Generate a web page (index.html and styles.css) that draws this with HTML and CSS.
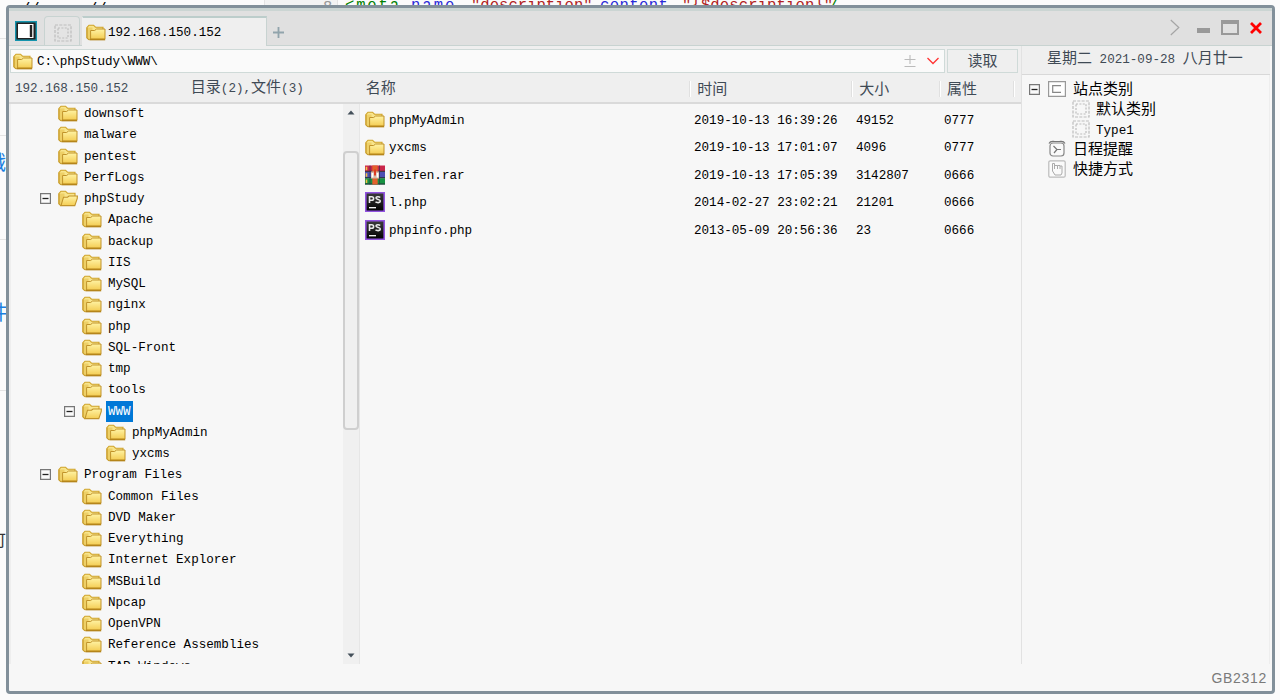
FILE: index.html
```html
<!DOCTYPE html>
<html lang="zh-CN">
<head>
    <meta charset="UTF-8">
    <title>192.168.150.152</title>
    <link rel="stylesheet" href="styles.css">
</head>
<body>

    <svg width="0" height="0" class="defs">
        <defs>
            <linearGradient id="gold" x1="0" y1="0" x2="0" y2="1">
                <stop offset="0" stop-color="#fff3a4"/>
                <stop offset="1" stop-color="#f4cd54"/>
            </linearGradient>
            <linearGradient id="dark" x1="0" y1="0" x2="0" y2="1">
                <stop offset="0" stop-color="#3c3c3c"/>
                <stop offset="1" stop-color="#000"/>
            </linearGradient>
        </defs>
        <symbol id="folder" viewBox="0 0 20 17">
            <path d="M1 14V3.500L3 1.200h4.500l2 2h7.500V6" fill="#f8e58c" stroke="#d0a329" stroke-width="1.1"/>
            <path d="M1.500 3.500v10.500l2 2h3V3.500z" fill="#eed067"/>
            <path d="M1 3.500V14l2 1.800" fill="none" stroke="#c79a25" stroke-width="1.1"/>
            <path d="M4.600 15V6.500h4l2-1.500h8.400v10z" fill="url(#gold)" stroke="#c1932a" stroke-width="1"/>
            <path d="M3.400 15.600h15.800" stroke="#b5851a" stroke-width="1.500"/>
        </symbol>
        <symbol id="folder-open" viewBox="0 0 20 17">
            <path d="M1 14V3.500L3 1.200h4.500l2 2h7.500V7" fill="#f8e58c" stroke="#d0a329" stroke-width="1.1"/>
            <path d="M1.500 3.500v10.500l2 2h3V3.500z" fill="#eed067"/>
            <path d="M3 15.800L1 14V3.500" fill="none" stroke="#c79a25" stroke-width="1.1"/>
            <path d="M3 15.600L5.500 7.200h4L11 6h8.400l-.2 2.600-2.400 7z" fill="url(#gold)" stroke="#c1932a" stroke-width="1.1"/>
        </symbol>
        <symbol id="minus" viewBox="0 0 11 11">
            <path d="M.6.6h9.8v9.8H.6z" fill="#fafafa" stroke="#777" stroke-width="1.2"/>
            <path d="M2.500 5.500h6" stroke="#222" stroke-width="1.3"/>
        </symbol>
        <symbol id="dashed" viewBox="0 0 18 18">
            <path d="M1 1h16v16H1z" fill="none" stroke="#bdbdbd" stroke-width="1.2" stroke-dasharray="3 1.3"/>
            <path d="M4 4h10v10H4z" fill="none" stroke="#bdbdbd" stroke-width="1.2" stroke-dasharray="2 1.4"/>
        </symbol>
        <symbol id="rar" viewBox="0 0 20 19">
            <path d="M0 0h20v6.300H0z" fill="#c9264a"/>
            <path d="M0 6.300h20v6.400H0z" fill="#4b50b4"/>
            <path d="M0 12.700h20V19H0z" fill="#169342"/>
            <path d="M0 5.800h20M0 12.200h20M0 18.500h20" stroke="#29303c" stroke-width="1"/>
            <path d="M1.500 1.300v3.500M1.500 7.800v3.500M1.500 14v3.500" stroke="#f3c04a" stroke-width="1.6"/>
            <path d="M5 0v19M14.500 0v19" stroke="#38304e" stroke-width=".7"/>
            <path d="M7.300 0h5.400v19H7.300z" fill="#e2602b"/>
            <path d="M6 6h8v7H6z" fill="#d8b8a4"/>
            <path d="M7.500 12V7.500M12.500 12V7.500" stroke="#fff" stroke-width="1.8"/>
            <path d="M9 4h2v6H9z" fill="#db3c24"/>
        </symbol>
        <symbol id="phpstorm" viewBox="0 0 20 20">
            <path d="M.8.8h18.400v18.400H.8z" fill="url(#dark)" stroke="#9254e0" stroke-width="1.6"/>
            <path d="M4.500 11V4.700h2.300a1.600 1.600 0 0 1 0 3.600H4.500M15.200 5.500c-1-1-4.200-1.200-4.200.6 0 2 4.300.9 4.300 3 0 2-3.600 1.800-4.800.6" fill="none" stroke="#e8e8e8" stroke-width="1.6"/>
            <path d="M4 15.700h7" stroke="#fff" stroke-width="1.3"/>
        </symbol>
    </svg>

    <!-- editor page behind the window -->
    <div class="backdrop">
        <span class="gutter"></span>
        <span class="code slash-a">//</span>
        <span class="code slash-b">//</span>
        <span class="code line-no">8</span>
        <span class="code tag">&lt;meta</span>
        <span class="code attr name">name</span>
        <span class="code str str-a">"description"</span>
        <span class="code attr content-attr">content</span>
        <span class="code str str-b">"{$description}"</span>
        <span class="code end">/</span>
        <span class="side side-a">戳</span>
        <span class="side side-b">件</span>
        <span class="side side-c">可</span>
        <span class="rule rule-a"></span>
        <span class="rule rule-b"></span>
        <span class="rule rule-c"></span>
        <span class="rule rule-d"></span>
    </div>

    <div class="window">
        <div class="titlebar">
            <svg class="panel-btn" width="22" height="20" viewBox="0 0 22 20">
                <path d="M.7.7h20.600v18.600H.7z" fill="#222" stroke="#1494ad" stroke-width="1.4"/>
                <path d="M3 3h15.500v14H3z" fill="#fff"/>
                <path d="M16 4v12" stroke="#222" stroke-width="2.4"/>
            </svg>
            <div class="tab tab-blank"><svg width="18" height="18"><use href="#dashed"/></svg></div>
            <div class="tab tab-active"><svg width="20" height="17"><use href="#folder"/></svg><span>192.168.150.152</span></div>
            <svg class="plus" width="11" height="11" viewBox="0 0 11 11"><path d="M5.500 0v11M0 5.500h11" stroke="#91a4ac" stroke-width="1.8"/></svg>
            <div class="controls">
                <svg width="10" height="17" viewBox="0 0 10 17"><path d="M.8 1l8 7.500-8 7.500" fill="none" stroke="#a5a5a5" stroke-width="1.2"/></svg>
                <svg width="13" height="17" viewBox="0 0 13 17"><path d="M0 9h13v5H0z" fill="#999"/></svg>
                <svg width="18" height="17" viewBox="0 0 18 17"><path d="M1 2h16v13H1z" fill="none" stroke="#999" stroke-width="2"/><path d="M0 3h18" stroke="#999" stroke-width="4"/></svg>
                <svg width="12" height="17" viewBox="0 0 12 17"><path d="M1 4l10 10M11 4l-10 10" stroke="#f00" stroke-width="2.8"/></svg>
            </div>
        </div>

        <div class="content">
            <div class="main">
                <div class="address-row">
                    <div class="address">
                        <svg width="20" height="17"><use href="#folder"/></svg>
                        <span class="path">C:\phpStudy\WWW\</span>
                        <svg width="12" height="14" viewBox="0 0 12 14"><path d="M6 1v9M.5 5.500h11M.5 12.500h11" stroke="#bbb" stroke-width="1.1"/></svg>
                        <svg class="drop" width="12" height="8" viewBox="0 0 12 8"><path d="M.5 1l5.500 5.500L11.500 1" fill="none" stroke="#f33" stroke-width="1.3"/></svg>
                    </div>
                    <div class="read-btn">读取</div>
                </div>

                <div class="head">
                    <div class="head-host">192.168.150.152</div>
                    <div class="head-count"><span class="zh">目录</span>(2),<span class="zh">文件</span>(3)</div>
                    <div class="head-name">名称</div>
                    <div class="head-time">时间</div>
                    <div class="head-size">大小</div>
                    <div class="head-attr">属性</div>
                    <div class="head-end"></div>
                </div>

                <div class="panes">
                    <div class="tree">
                        <div class="node l1"><svg class="icon"><use href="#folder"/></svg><span>downsoft</span></div>
                        <div class="node l1"><svg class="icon"><use href="#folder"/></svg><span>malware</span></div>
                        <div class="node l1"><svg class="icon"><use href="#folder"/></svg><span>pentest</span></div>
                        <div class="node l1"><svg class="icon"><use href="#folder"/></svg><span>PerfLogs</span></div>
                        <div class="node l1 parent"><svg class="toggle"><use href="#minus"/></svg><svg class="icon"><use href="#folder-open"/></svg><span>phpStudy</span></div>
                        <div class="node l2"><svg class="icon"><use href="#folder"/></svg><span>Apache</span></div>
                        <div class="node l2"><svg class="icon"><use href="#folder"/></svg><span>backup</span></div>
                        <div class="node l2"><svg class="icon"><use href="#folder"/></svg><span>IIS</span></div>
                        <div class="node l2"><svg class="icon"><use href="#folder"/></svg><span>MySQL</span></div>
                        <div class="node l2"><svg class="icon"><use href="#folder"/></svg><span>nginx</span></div>
                        <div class="node l2"><svg class="icon"><use href="#folder"/></svg><span>php</span></div>
                        <div class="node l2"><svg class="icon"><use href="#folder"/></svg><span>SQL-Front</span></div>
                        <div class="node l2"><svg class="icon"><use href="#folder"/></svg><span>tmp</span></div>
                        <div class="node l2"><svg class="icon"><use href="#folder"/></svg><span>tools</span></div>
                        <div class="node l2 parent"><svg class="toggle"><use href="#minus"/></svg><svg class="icon"><use href="#folder-open"/></svg><span class="selected">WWW</span></div>
                        <div class="node l3"><svg class="icon"><use href="#folder"/></svg><span>phpMyAdmin</span></div>
                        <div class="node l3"><svg class="icon"><use href="#folder"/></svg><span>yxcms</span></div>
                        <div class="node l1 parent"><svg class="toggle"><use href="#minus"/></svg><svg class="icon"><use href="#folder"/></svg><span>Program Files</span></div>
                        <div class="node l2"><svg class="icon"><use href="#folder"/></svg><span>Common Files</span></div>
                        <div class="node l2"><svg class="icon"><use href="#folder"/></svg><span>DVD Maker</span></div>
                        <div class="node l2"><svg class="icon"><use href="#folder"/></svg><span>Everything</span></div>
                        <div class="node l2"><svg class="icon"><use href="#folder"/></svg><span>Internet Explorer</span></div>
                        <div class="node l2"><svg class="icon"><use href="#folder"/></svg><span>MSBuild</span></div>
                        <div class="node l2"><svg class="icon"><use href="#folder"/></svg><span>Npcap</span></div>
                        <div class="node l2"><svg class="icon"><use href="#folder"/></svg><span>OpenVPN</span></div>
                        <div class="node l2"><svg class="icon"><use href="#folder"/></svg><span>Reference Assemblies</span></div>
                        <div class="node l2"><svg class="icon"><use href="#folder"/></svg><span>TAP-Windows</span></div>
                    </div>
                    <div class="scrollbar">
                        <svg width="8" height="5" viewBox="0 0 8 5"><path d="M.5 4.500L4 .5l3.500 4z" fill="#44505a"/></svg>
                        <div class="thumb"></div>
                        <svg width="8" height="5" viewBox="0 0 8 5"><path d="M.5.5L4 4.500 7.500.5z" fill="#44505a"/></svg>
                    </div>
                    <div class="files">
                        <div class="file"><svg class="icon"><use href="#folder"/></svg><span>phpMyAdmin</span><span>2019-10-13 16:39:26</span><span>49152</span><span>0777</span></div>
                        <div class="file"><svg class="icon"><use href="#folder"/></svg><span>yxcms</span><span>2019-10-13 17:01:07</span><span>4096</span><span>0777</span></div>
                        <div class="file"><svg class="type-icon"><use href="#rar"/></svg><span>beifen.rar</span><span>2019-10-13 17:05:39</span><span>3142807</span><span>0666</span></div>
                        <div class="file"><svg class="type-icon"><use href="#phpstorm"/></svg><span>l.php</span><span>2014-02-27 23:02:21</span><span>21201</span><span>0666</span></div>
                        <div class="file"><svg class="type-icon"><use href="#phpstorm"/></svg><span>phpinfo.php</span><span>2013-05-09 20:56:36</span><span>23</span><span>0666</span></div>
                    </div>
                </div>
            </div>

            <div class="sidebar">
                <div class="date"><span class="zh">星期二</span> 2021-09-28 <span class="zh">八月廿一</span></div>
                <div class="cats">
                    <div class="cat top"><svg width="11" height="11"><use href="#minus"/></svg><svg width="18" height="16" viewBox="0 0 18 16"><path d="M.6.6h16.800v14.800H.6z" fill="#fff" stroke="#999" stroke-width="1.2"/><path d="M13 4.700H4.700v6.600H13" fill="none" stroke="#888" stroke-width="1.2"/></svg><span>站点类别</span></div>
                    <div class="cat child"><svg width="18" height="18"><use href="#dashed"/></svg><span>默认类别</span></div>
                    <div class="cat child type"><svg width="18" height="18"><use href="#dashed"/></svg><span>Type1</span></div>
                    <div class="cat"><svg width="18" height="18" viewBox="0 0 18 18"><rect x="2" y="3" width="14" height="13" rx="3" fill="#fafafa" stroke="#888" stroke-width="1.2"/><path d="M1 3.500C2.500.5 5 1.500 6.500 1.500h5C13 1.500 15.500.5 17 3.500M5.500 6l3.500 3.500L6 13M9 9.500h4" fill="none" stroke="#777" stroke-width="1.2"/></svg><span>日程提醒</span></div>
                    <div class="cat"><svg width="18" height="18" viewBox="0 0 18 18"><rect x=".8" y=".8" width="16.4" height="16.4" rx="1.5" fill="#fafafa" stroke="#bbb" stroke-width="1.2"/><path d="M4.500 3.500v7.500l2.500 4h6l1-2V6h-2v3M6.500 9V3.500h-2M6.500 5.500h3V9M9.500 5.500H12" fill="none" stroke="#aaa" stroke-width="1"/></svg><span>快捷方式</span></div>
                </div>
            </div>
        </div>

        <div class="status">GB2312</div>
    </div>

</body>
</html>
```
FILE: styles.css
```css
* {
    box-sizing: border-box;
}

body {
    margin: 0;
    height: 700px;
    overflow: hidden;
    position: relative;
    background: #fbfbfb;
    font-family: "Liberation Mono", "Noto Sans CJK SC", monospace;
    font-size: 12.6px;
    line-height: 20px;
    color: #000;
    white-space: nowrap;
}

svg {
    display: block;
    flex: none;
}

.defs {
    position: absolute;
}

.zh {
    font-size: 15px;
}

/* what shows around the window edges */
.backdrop {
    position: absolute;
    inset: 0;
    overflow: hidden;
}

.backdrop span {
    position: absolute;
}

.gutter {
    left: 264px;
    top: 0;
    width: 74px;
    height: 5px;
    background: #f3f3f3;
    border-left: 1px solid #e4e4e4;
    border-right: 1px solid #e4e4e4;
}

.code {
    top: -4px;
    font-size: 15.6px;
    line-height: 20px;
}

.slash-a {
    left: 21px;
    top: 0;
}

.slash-b {
    left: 88px;
    top: 0;
}

.line-no {
    left: 323px;
    top: -2px;
    color: #999;
}

.tag {
    left: 345px;
    letter-spacing: 1.8px;
    color: #008000;
}

.attr {
    color: #2a2ad8;
}

.name {
    left: 411px;
    letter-spacing: 2px;
}

.content-attr {
    left: 600px;
    letter-spacing: 0.4px;
}

.str {
    color: #b22222;
}

.str-a {
    left: 471px;
}

.str-b {
    left: 682px;
    letter-spacing: 0.1px;
}

.end {
    left: 829px;
    color: #008000;
}

.side {
    left: -14px;
    font-size: 20px;
    line-height: 24px;
    color: #1a7fe0;
}

.side-a {
    top: 153px;
}

.side-b {
    top: 303px;
    left: -12px;
}

.side-c {
    top: 530px;
    left: -10px;
    font-size: 16px;
    color: #333;
}

.rule {
    left: 0;
    width: 6px;
    height: 1px;
    background: #e4e4e4;
}

.rule-a { top: 38px; }
.rule-b { top: 135px; }
.rule-c { top: 239px; }
.rule-d { top: 390px; }

.window {
    position: absolute;
    left: 6px;
    top: 5px;
    width: 1269px;
    height: 689px;
    display: flex;
    flex-direction: column;
    border: 3px solid #82909a;
    border-radius: 4px;
    background: #f7f7f7;
}

.titlebar {
    height: 38px;
    flex: none;
    display: flex;
    align-items: flex-end;
    padding-left: 6px;
    background: #e0e0e0;
    border-top: 3px solid #cbd5d3;
    border-bottom: 1px solid #c8d3d1;
}

.panel-btn {
    margin: 0 7px 4px 0;
}

.tab {
    height: 29px;
    display: flex;
    align-items: center;
    border: 1px solid #c8d3d1;
    border-bottom: none;
    border-radius: 4px 4px 0 0;
    background: #e4e4e4;
}

.tab-blank {
    width: 36px;
    padding: 3px 0 0 9px;
    margin-right: 2px;
}

.tab-active {
    width: 185px;
    height: 30px;
    margin-bottom: -1px;
    padding: 1px 0 0 3px;
    gap: 2px;
    border-top: 2px solid #bccdcb;
    border-radius: 0;
    background: #efefef;
    border-left-color: #efefef;
}

.tab-active span {
    padding-top: 1px;
}

.plus {
    margin: 0 0 7px 6px;
}

.controls {
    display: flex;
    margin: 0 10px 9px auto;
    gap: 11px;
}

.controls svg:first-child {
    margin-right: 6px;
}

.content {
    height: 618px;
    flex: none;
    display: flex;
}

.main {
    width: 1013px;
    flex: none;
    display: flex;
    flex-direction: column;
    background: #efefef;
    border-right: 1px solid #e2e2e2;
}

.address-row {
    display: flex;
    gap: 2px;
    padding: 3px 3px 0 1px;
    height: 27px;
}

.address {
    width: 936px;
    height: 24px;
    display: flex;
    align-items: center;
    padding: 0 5px 0 2px;
    background: #fafafa;
    border: 1px solid #cfdad8;
}

.path {
    flex: 1;
    margin-left: 4px;
    padding-top: 2px;
}

.drop {
    margin-left: 11px;
}

.read-btn {
    width: 71px;
    height: 24px;
    line-height: 26px;
    text-align: center;
    font-size: 15px;
    color: #3f4a55;
    border: 1px solid #cfdad8;
}

.head {
    height: 31px;
    flex: none;
    display: flex;
    align-items: center;
    padding: 2px 0 0 6px;
    border-bottom: 2px solid #dadada;
    font-size: 15px;
    color: #3f4a55;
}

.head-host {
    width: 176px;
    font-size: 12.6px;
}

.head-count {
    width: 175px;
    font-size: 12.6px;
}

.head-name {
    width: 325px;
    padding-top: 2px;
}

.head-time,
.head-size,
.head-attr,
.head-end {
    padding-left: 6px;
    height: 16px;
    line-height: 19px;
    border-left: 1px solid #fff;
    box-shadow: -1px 0 0 #e0e0e0;
}

.head-time {
    width: 162px;
}

.head-size {
    width: 88px;
}

.head-attr {
    width: 74px;
}

.panes {
    display: flex;
    height: 560px;
    background: #f7f7f7;
    border-left: 2px solid #eee;
}

.tree {
    width: 332px;
    overflow: hidden;
}

.node {
    height: 21.25px;
    display: flex;
    align-items: center;
    gap: 4px;
}

.node:first-child {
    margin-top: -1px;
}

.l1 {
    padding-left: 47px;
}

.l2 {
    padding-left: 71px;
}

.l3 {
    padding-left: 95px;
}

.parent.l1 {
    padding-left: 29px;
}

.parent.l2 {
    padding-left: 53px;
}

.icon {
    width: 20px;
    height: 17px;
}

.node span {
    padding: 1px 2px 0;
}

.toggle {
    width: 11px;
    height: 11px;
    margin-right: 3px;
}

.selected {
    background: #0078d7;
    color: #fff;
}

.scrollbar {
    width: 17px;
    display: flex;
    flex-direction: column;
    align-items: center;
    padding: 6px 0;
    background: #f0f0f0;
    border-right: 1px solid #e6e6e6;
}

.thumb {
    width: 16px;
    height: 279px;
    margin: 36px 0 auto;
    border: 2px solid #cfcfcf;
    border-radius: 4px;
}

.files {
    padding-top: 2px;
}

.file {
    height: 27.5px;
    display: grid;
    grid-template-columns: 24px 305px 162px 88px 70px;
    align-items: center;
    padding-left: 5px;
}

.file span {
    padding-top: 2px;
}

.type-icon {
    width: 20px;
    height: 20px;
}

.sidebar {
    flex: 1;
    margin-right: 2px;
}

.date {
    height: 29px;
    line-height: 28px;
    padding-left: 25px;
    background: #efefef;
    border-bottom: 1px solid #d8d8d8;
    color: #3f4a55;
}

.cats {
    padding-top: 4px;
    height: 589px;
    border-right: 1px solid #eee;
}

.cat {
    height: 20px;
    display: flex;
    align-items: center;
    gap: 7px;
    padding-left: 26px;
    font-size: 15px;
}

.cat span {
    padding-top: 3px;
}

.cat.top {
    padding-left: 7px;
    gap: 8px;
}

.cat.top span {
    margin-left: -1px;
}

.cat.child {
    padding-left: 50px;
    gap: 6px;
}

.cat.type {
    font-size: 12.6px;
}

.status {
    flex: 1;
    padding: 4px 5px 0 0;
    text-align: right;
    font-family: "Liberation Sans", sans-serif;
    font-size: 14px;
    letter-spacing: 0.7px;
    color: #7a7a7a;
}
```
